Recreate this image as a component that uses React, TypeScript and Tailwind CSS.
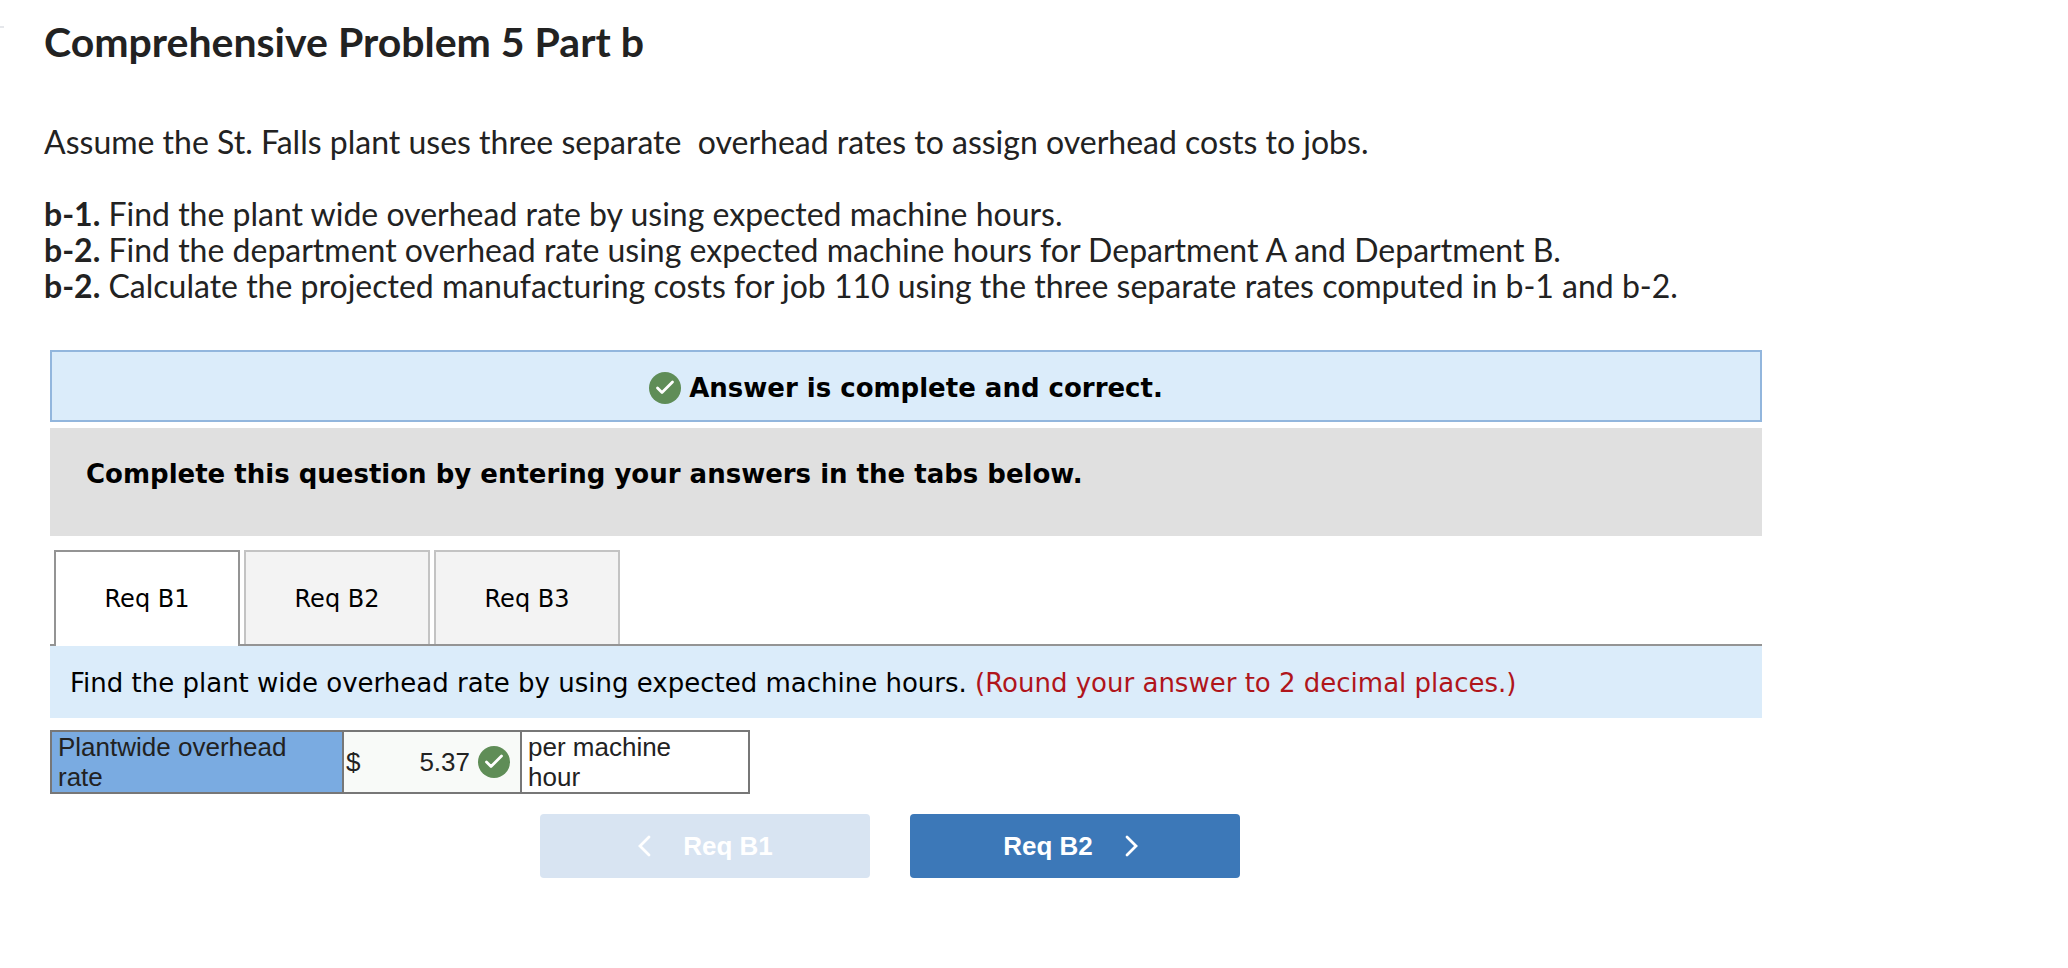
import { useState } from "react";

// Tabs shown above the question
const tabs = ["Req B1", "Req B2", "Req B3"];

// Instructions listed under the problem statement
const parts = [
  { label: "b-1.", text: "Find the plant wide overhead rate by using expected machine hours." },
  { label: "b-2.", text: "Find the department overhead rate using expected machine hours for Department A and Department B." },
  { label: "b-2.", text: "Calculate the projected manufacturing costs for job 110 using the three separate rates computed in b-1 and b-2." },
];

// Green circle with a white tick
function CorrectIcon() {
  return (
    <svg viewBox="0 0 32 32" className="size-8 shrink-0" aria-hidden="true">
      <circle cx="16" cy="16" r="16" fill="#5f8d57" />
      <path
        d="M8.5 16 L13 20.5 L23.5 10"
        fill="none"
        stroke="#fff"
        strokeWidth="2.8"
        strokeLinecap="round"
        strokeLinejoin="round"
      />
    </svg>
  );
}

// Thin arrow used in the navigation buttons
function Chevron({ direction }: { direction: "left" | "right" }) {
  return (
    <svg viewBox="0 0 14 22" className="h-[22px] w-[14px] shrink-0" aria-hidden="true">
      <path
        d={direction === "left" ? "M12 2 L3 11 L12 20" : "M2 2 L11 11 L2 20"}
        fill="none"
        stroke="currentColor"
        strokeWidth="2.8"
        strokeLinecap="round"
      />
    </svg>
  );
}

export default function App() {
  const [activeTab, setActiveTab] = useState("Req B1");
  const [rate, setRate] = useState("5.37");

  return (
    <main className="relative bg-white pt-5 pb-20 text-[#222222]">
      {/* Edge of the side rule */}
      <div className="absolute top-[26px] left-0 h-[2px] w-1 bg-gray-200" />

      {/* Problem statement */}
      <section className="px-11 font-['Proxima_Nova','Lato',sans-serif] text-[32px] leading-9">
        <h1 className="text-[41px] leading-11 font-bold">Comprehensive Problem 5 Part b</h1>
        <p className="mt-15 whitespace-pre-wrap">
          {"Assume the St. Falls plant uses three separate  overhead rates to assign overhead costs to jobs."}
        </p>
        <div className="mt-9">
          {parts.map((part, index) => (
            <p key={index}>
              <b>{part.label}</b> {part.text}
            </p>
          ))}
        </div>
      </section>

      <section className="mt-[46px] px-[50px] font-['Verdana','DejaVu_Sans',sans-serif] text-[26px] leading-8 text-black">
        <div className="max-w-[1712px]">
          {/* Result banner */}
          <div className="flex items-center justify-center gap-2 border-2 border-[#92b6dd] bg-[#dbecfa] pt-5 pb-4 font-bold">
            <CorrectIcon />
            <p>Answer is complete and correct.</p>
          </div>

          <div className="mt-1.5 bg-[#e0e0e0] px-9 pt-[30px] pb-[46px] font-bold">
            <p>Complete this question by entering your answers in the tabs below.</p>
          </div>

          {/* Tab strip */}
          <div role="tablist" className="mt-3.5 flex gap-1 border-b-2 border-[#949494] px-1 text-2xl">
            {tabs.map((tab) => (
              <button
                key={tab}
                type="button"
                role="tab"
                aria-selected={tab === activeTab}
                onClick={() => setActiveTab(tab)}
                className={
                  tab === activeTab
                    ? "-mb-[2px] h-24 w-[186px] border-2 border-b-0 border-[#949494] bg-white"
                    : "h-[94px] w-[186px] border-2 border-b-0 border-[#c3c3c3] bg-[#f3f3f3] pt-0.5"
                }
              >
                {tab}
              </button>
            ))}
          </div>

          <p className="bg-[#dbecfa] px-5 pt-[21px] pb-[19px]">
            Find the plant wide overhead rate by using expected machine hours.{" "}
            <span className="text-[#b0151b]">(Round your answer to 2 decimal places.)</span>
          </p>

          {/* Answer table */}
          <table className="mt-3 w-[700px] table-fixed border-collapse border-2 border-[#777777] font-['Arial','Liberation_Sans',sans-serif] leading-[30px] text-[#222222]">
            <tbody>
              <tr>
                <th scope="row" className="w-[292px] border-2 border-[#777777] bg-[#7aabe1] px-1.5 text-left font-normal">
                  <label htmlFor="rate">Plantwide overhead rate</label>
                </th>
                <td className="w-[178px] border-2 border-[#777777] bg-[#f8faf8] pr-2.5 pl-0.5">
                  <div className="flex items-center">
                    <span>$</span>
                    <input
                      id="rate"
                      type="text"
                      value={rate}
                      onChange={(e) => setRate(e.target.value)}
                      className="mr-2 w-full min-w-0 text-right"
                    />
                    <CorrectIcon />
                  </div>
                </td>
                <td className="border-2 border-[#777777] bg-white pr-12 pl-1.5">per machine hour</td>
              </tr>
            </tbody>
          </table>

          {/* Previous / next buttons */}
          <div className="mt-5 flex justify-center gap-10 pr-8 font-['Arial','Liberation_Sans',sans-serif] font-bold text-white">
            <button type="button" disabled className="flex h-16 w-[330px] items-center justify-center gap-8 rounded bg-[#d8e4f2]">
              <Chevron direction="left" />
              Req B1
            </button>
            <button
              type="button"
              onClick={() => setActiveTab("Req B2")}
              className="flex h-16 w-[330px] items-center justify-center gap-8 rounded bg-[#3c78b8] pr-2"
            >
              Req B2
              <Chevron direction="right" />
            </button>
          </div>
        </div>
      </section>
    </main>
  );
}
